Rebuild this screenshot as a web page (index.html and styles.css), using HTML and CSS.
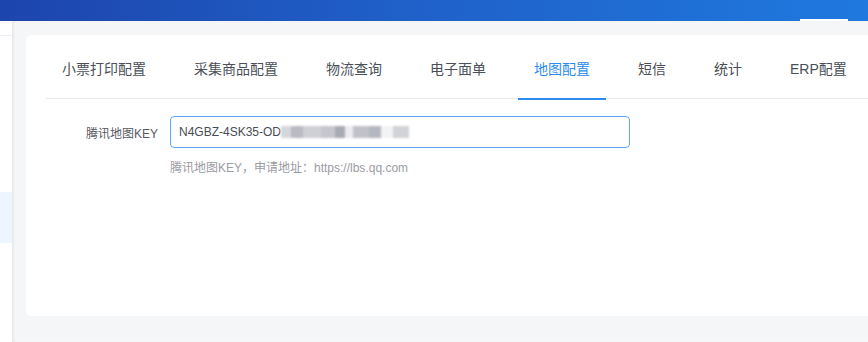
FILE: index.html
```html
<!DOCTYPE html>
<html lang="zh-CN">
<head>
<meta charset="utf-8">
<title>地图配置</title>
<link rel="stylesheet" href="styles.css">
</head>
<body>
<header class="header">
  <span class="header-indicator"></span>
</header>
<div class="layout">
  <aside class="sidebar">
    <div class="side-row"></div>
    <div class="side-active"></div>
  </aside>
  <main class="main">
    <section class="card">
      <nav class="tabs">
        <span class="tab">小票打印配置</span>
        <span class="tab">采集商品配置</span>
        <span class="tab">物流查询</span>
        <span class="tab">电子面单</span>
        <span class="tab active">地图配置</span>
        <span class="tab">短信</span>
        <span class="tab">统计</span>
        <span class="tab">ERP配置</span>
      </nav>
      <div class="form">
        <div class="form-row">
          <label class="form-label">腾讯地图KEY</label>
          <div class="input">
            <span class="input-text">N4GBZ-4SK35-OD</span>
            <span class="blur">
              <i class="b b1"></i><i class="b b2"></i><i class="b b3"></i><i class="b b4"></i><i class="b b5"></i><i class="b b6"></i><i class="b b7"></i><i class="b b8"></i><i class="b b9"></i><i class="b b10"></i>
            </span>
          </div>
        </div>
        <div class="hint">腾讯地图KEY，申请地址：https://lbs.qq.com</div>
      </div>
    </section>
  </main>
</div>
</body>
</html>
```

FILE: styles.css
```css
* { box-sizing: border-box; }
html, body { margin: 0; padding: 0; }
body {
  width: 868px;
  height: 342px;
  overflow: hidden;
  font-family: "Liberation Sans", "Noto Sans CJK SC", sans-serif;
  background: #f5f6f8;
}
.header {
  height: 21px;
  background: linear-gradient(90deg, #1d45ad 0%, #1f5fc8 45%, #1f79de 100%);
  display: flex;
  justify-content: flex-end;
  align-items: flex-end;
  padding-right: 20px;
}
.header-indicator {
  width: 48px;
  height: 2px;
  background: #ffffff;
}
.layout {
  display: flex;
  height: 321px;
}
.sidebar {
  width: 12px;
  flex-shrink: 0;
  background: #ffffff;
  display: flex;
  flex-direction: column;
}
.side-row {
  height: 15px;
  border-bottom: 1px solid #eceef2;
}
.side-active {
  margin-top: 156px;
  height: 51px;
  background: #edf5ff;
}
.main {
  flex: 1;
  background: #f5f6f8;
  box-shadow: inset 2px 0 2px rgba(0, 0, 0, 0.05);
  padding: 14px 0 0 14px;
}
.card {
  height: 281px;
  background: #ffffff;
  border-radius: 5px 0 0 5px;
  padding: 20px 0 0 20px;
}
.tabs {
  display: flex;
  gap: 16px;
  border-bottom: 1px solid #e4e7ed;
  height: 44px;
}
.tab {
  position: relative;
  padding: 0 16px;
  font-size: 14px;
  line-height: 28px;
  color: #4a4f58;
  white-space: nowrap;
}
.tab.active { color: #2d8cf0; }
.tab.active::after {
  content: "";
  position: absolute;
  left: 0;
  right: 0;
  bottom: -2px;
  height: 2px;
  background: #2d8cf0;
}
.form { padding-top: 17px; }
.form-row {
  display: flex;
  align-items: center;
}
.form-label {
  flex-shrink: 0;
  width: 112px;
  text-align: right;
  font-size: 12px;
  color: #555a63;
  white-space: nowrap;
  margin-right: 12px;
}
.input {
  flex-shrink: 0;
  width: 460px;
  height: 32px;
  border: 1px solid #5ea6f5;
  border-radius: 4px;
  padding-left: 8px;
  display: flex;
  align-items: center;
  font-size: 12px;
  color: #484c55;
}
.blur {
  display: flex;
  align-items: center;
  height: 20px;
  filter: blur(1.2px);
}
.b { display: block; height: 12px; }
.b1 { width: 10px; background: #d6d7dc; }
.b2 { width: 12px; background: #b9bac2; }
.b3 { width: 18px; background: #cfd0d6; }
.b4 { width: 14px; background: #c6c7cd; }
.b5 { width: 10px; background: #a9abb4; }
.b6 { width: 8px; background: #ececef; }
.b7 { width: 16px; background: #c1c2c9; }
.b8 { width: 12px; background: #b5b7be; }
.b9 { width: 12px; background: #f3f3f5; }
.b10 { width: 16px; background: #d2d3d8; }
.hint {
  margin-top: 10px;
  padding-left: 124px;
  font-size: 12px;
  line-height: 20px;
  color: #9a9ca3;
}
```
